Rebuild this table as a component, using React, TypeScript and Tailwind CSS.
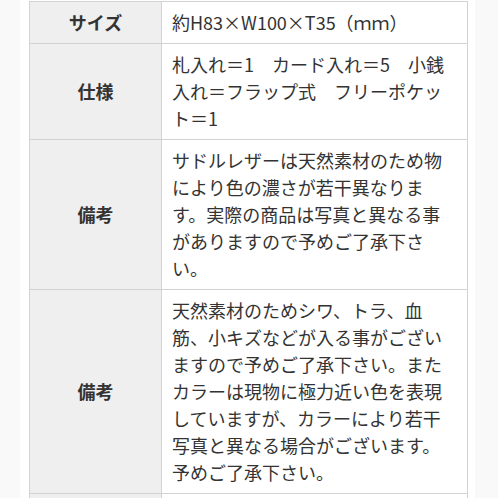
import React from "react";

type Spec = {
  label: string;
  value: string;
};

const specs: Spec[] = [
  { label: "サイズ", value: "約H83×W100×T35（ｍｍ）" },
  {
    label: "仕様",
    value: "札入れ＝1　カード入れ＝5　小銭入れ＝フラップ式　フリーポケット＝1",
  },
  {
    label: "備考",
    value:
      "サドルレザーは天然素材のため物により色の濃さが若干異なります。実際の商品は写真と異なる事がありますので予めご了承下さい。",
  },
  {
    label: "備考",
    value:
      "天然素材のためシワ、トラ、血筋、小キズなどが入る事がございますので予めご了承下さい。またカラーは現物に極力近い色を表現していますが、カラーにより若干写真と異なる場合がございます。予めご了承下さい。",
  },
  // next row is cut off by the window, only its top border shows
  { label: "\u00a0", value: "\u00a0" },
];

export default function App() {
  return (
    <div
      className="h-[498px] w-[498px] overflow-hidden bg-[#f9f9f9] text-[#333]"
      style={{ fontFamily: '"Noto Sans CJK JP", "Noto Sans", sans-serif' }}
    >
      <div className="ml-[20px] h-full w-[455px] bg-white px-[9px] pt-[1px]">
        <table className="w-[439px] table-fixed border-collapse text-[18px] leading-[27px]">
          <colgroup>
            <col className="w-[132px]" />
            <col />
          </colgroup>
          <tbody>
            {specs.map((spec, i) => (
              <tr key={i}>
                <th className="border-[1.5px] border-[#d2d2d2] bg-[#efefef] px-2 py-[7px] text-center align-middle font-bold">
                  {spec.label}
                </th>
                <td className="border-[1.5px] border-[#d2d2d2] py-[7px] pl-[10px] pr-[12px] text-left align-top font-normal">
                  {spec.value}
                </td>
              </tr>
            ))}
          </tbody>
        </table>
      </div>
    </div>
  );
}
